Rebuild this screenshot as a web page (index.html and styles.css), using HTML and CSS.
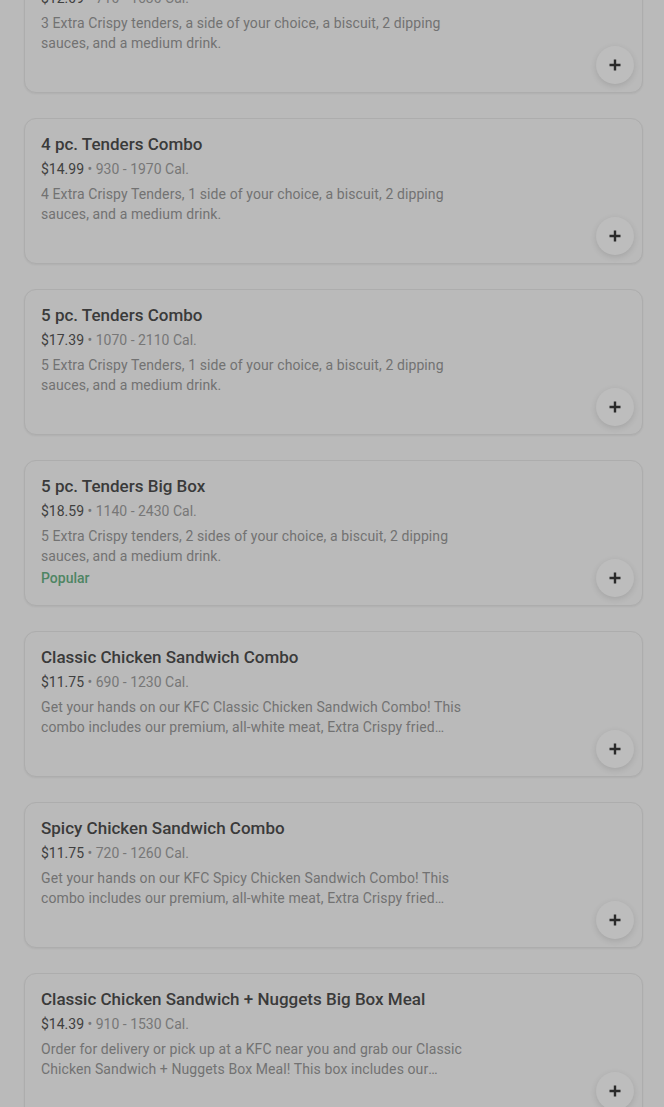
FILE: index.html
```html
<!DOCTYPE html>
<html lang="en">
<head>
    <meta charset="UTF-8">
    <meta name="viewport" content="width=device-width, initial-scale=1.0">
    <title>Menu - Combos</title>
    <link rel="stylesheet" href="styles.css">
</head>
<body>
    <div class="menu-list">
        <div class="menu-item">
            <div class="item-info">
                <h3 class="item-title">3 pc. Tenders Combo</h3>
                <p class="item-meta"><span class="price">$12.09</span> • 710 - 1630 Cal.</p>
                <p class="item-desc">3 Extra Crispy tenders, a side of your choice, a biscuit, 2 dipping sauces, and a medium drink.</p>
            </div>
            <div class="item-side"><button class="add-btn"><svg viewBox="0 0 12 12" width="12" height="12"><path d="M6 0.5v11M0.5 6h11"/></svg></button></div>
        </div>

        <div class="menu-item">
            <div class="item-info">
                <h3 class="item-title">4 pc. Tenders Combo</h3>
                <p class="item-meta"><span class="price">$14.99</span> • 930 - 1970 Cal.</p>
                <p class="item-desc">4 Extra Crispy Tenders, 1 side of your choice, a biscuit, 2 dipping sauces, and a medium drink.</p>
            </div>
            <div class="item-side"><button class="add-btn"><svg viewBox="0 0 12 12" width="12" height="12"><path d="M6 0.5v11M0.5 6h11"/></svg></button></div>
        </div>

        <div class="menu-item">
            <div class="item-info">
                <h3 class="item-title">5 pc. Tenders Combo</h3>
                <p class="item-meta"><span class="price">$17.39</span> • 1070 - 2110 Cal.</p>
                <p class="item-desc">5 Extra Crispy Tenders, 1 side of your choice, a biscuit, 2 dipping sauces, and a medium drink.</p>
            </div>
            <div class="item-side"><button class="add-btn"><svg viewBox="0 0 12 12" width="12" height="12"><path d="M6 0.5v11M0.5 6h11"/></svg></button></div>
        </div>

        <div class="menu-item">
            <div class="item-info">
                <h3 class="item-title">5 pc. Tenders Big Box</h3>
                <p class="item-meta"><span class="price">$18.59</span> • 1140 - 2430 Cal.</p>
                <p class="item-desc">5 Extra Crispy tenders, 2 sides of your choice, a biscuit, 2 dipping sauces, and a medium drink.</p>
                <p class="item-tag">Popular</p>
            </div>
            <div class="item-side"><button class="add-btn"><svg viewBox="0 0 12 12" width="12" height="12"><path d="M6 0.5v11M0.5 6h11"/></svg></button></div>
        </div>

        <div class="menu-item">
            <div class="item-info">
                <h3 class="item-title">Classic Chicken Sandwich Combo</h3>
                <p class="item-meta"><span class="price">$11.75</span> • 690 - 1230 Cal.</p>
                <p class="item-desc">Get your hands on our KFC Classic Chicken Sandwich Combo! This combo includes our premium, all-white meat, Extra Crispy fried chicken breast fillet, pickles and mayo.</p>
            </div>
            <div class="item-side"><button class="add-btn"><svg viewBox="0 0 12 12" width="12" height="12"><path d="M6 0.5v11M0.5 6h11"/></svg></button></div>
        </div>

        <div class="menu-item">
            <div class="item-info">
                <h3 class="item-title">Spicy Chicken Sandwich Combo</h3>
                <p class="item-meta"><span class="price">$11.75</span> • 720 - 1260 Cal.</p>
                <p class="item-desc">Get your hands on our KFC Spicy Chicken Sandwich Combo! This combo includes our premium, all-white meat, Extra Crispy fried chicken breast fillet, pickles and spicy sauce.</p>
            </div>
            <div class="item-side"><button class="add-btn"><svg viewBox="0 0 12 12" width="12" height="12"><path d="M6 0.5v11M0.5 6h11"/></svg></button></div>
        </div>

        <div class="menu-item">
            <div class="item-info">
                <h3 class="item-title">Classic Chicken Sandwich + Nuggets Big Box Meal</h3>
                <p class="item-meta"><span class="price">$14.39</span> • 910 - 1530 Cal.</p>
                <p class="item-desc">Order for delivery or pick up at a KFC near you and grab our Classic Chicken Sandwich + Nuggets Box Meal! This box includes our sandwich, nuggets, a side and a drink.</p>
            </div>
            <div class="item-side"><button class="add-btn"><svg viewBox="0 0 12 12" width="12" height="12"><path d="M6 0.5v11M0.5 6h11"/></svg></button></div>
        </div>
    </div>
</body>
</html>
```

FILE: styles.css
```css
body {
    margin: 0;
    background: #bababa;
    font-family: Roboto, "Noto Sans", sans-serif;
    overflow: hidden;
}
.menu-list {
    display: flex;
    flex-direction: column;
    gap: 25px;
    padding: 0 21px 0 24px;
    margin-top: -53px;
}
.menu-item {
    display: flex;
    height: 146px;
    box-sizing: border-box;
    background: #bababa;
    border: 1px solid #adadad;
    border-radius: 12px;
    box-shadow: 0 1px 2px rgba(0,0,0,0.06);
}
.item-info {
    flex: 0 0 440px;
    padding: 13px 0 0 16px;
    box-sizing: border-box;
}
.item-title {
    margin: 0;
    font-size: 17px;
    font-weight: 500;
    line-height: 24px;
    color: #3a3a3a;
}
.item-meta {
    margin: 1px 0 0;
    font-size: 14px;
    line-height: 24px;
    color: #777;
}
.price {
    color: #404040;
}
.item-desc {
    margin: 3px 0 0;
    font-size: 14px;
    letter-spacing: 0.1px;
    line-height: 20px;
    color: #727272;
    display: -webkit-box;
    -webkit-line-clamp: 2;
    -webkit-box-orient: vertical;
    overflow: hidden;
}
.item-tag {
    margin: 2px 0 0;
    font-size: 14px;
    font-weight: 500;
    line-height: 20px;
    color: #4e8563;
}
.item-side {
    flex: 1;
    display: flex;
    align-items: flex-end;
    justify-content: flex-end;
    padding: 0 8px 8px 0;
}
.add-btn {
    width: 38px;
    height: 38px;
    border: none;
    border-radius: 50%;
    background: #bdbdbd;
    padding: 0;
    display: flex;
    align-items: center;
    justify-content: center;
    box-shadow: 0 2px 6px rgba(0,0,0,0.12);
}
.add-btn svg {
    stroke: #2a2a2a;
    stroke-width: 2.4;
    fill: none;
}
```
